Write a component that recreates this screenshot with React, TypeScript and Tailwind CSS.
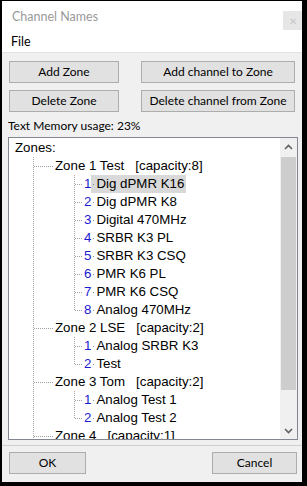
import React from "react";

type Row =
   | { kind: "root"; label: string }
   | { kind: "zone"; name: string; capacity: number }
   | { kind: "channel"; num: number; name: string; last: boolean; selected?: boolean };

const rows: Row[] = [
   { kind: "root", label: "Zones:" },
   { kind: "zone", name: "Zone 1 Test", capacity: 8 },
   { kind: "channel", num: 1, name: "Dig dPMR K16", last: false, selected: true },
   { kind: "channel", num: 2, name: "Dig dPMR K8", last: false },
   { kind: "channel", num: 3, name: "Digital 470MHz", last: false },
   { kind: "channel", num: 4, name: "SRBR K3 PL", last: false },
   { kind: "channel", num: 5, name: "SRBR K3 CSQ", last: false },
   { kind: "channel", num: 6, name: "PMR K6 PL", last: false },
   { kind: "channel", num: 7, name: "PMR K6 CSQ", last: false },
   { kind: "channel", num: 8, name: "Analog 470MHz", last: true },
   { kind: "zone", name: "Zone 2 LSE", capacity: 2 },
   { kind: "channel", num: 1, name: "Analog SRBR K3", last: false },
   { kind: "channel", num: 2, name: "Test", last: true },
   { kind: "zone", name: "Zone 3 Tom", capacity: 2 },
   { kind: "channel", num: 1, name: "Analog Test 1", last: false },
   { kind: "channel", num: 2, name: "Analog Test 2", last: true },
   { kind: "zone", name: "Zone 4", capacity: 1 },
];

const DOT = "#a0a0a0";

const WinButton: React.FC<{ label: string; className?: string }> = ({ label, className = "" }) => (
   <button className={`h-[22px] border border-[#adadad] bg-[#e1e1e1] text-[12px] text-black leading-none ${className}`}>{label}</button>
);

const TreeRow: React.FC<{ row: Row }> = ({ row }) => {
   if (row.kind === "root") {
      return <div className="h-[18px] flex items-center pl-[6px]">{row.label}</div>;
   }
   if (row.kind === "zone") {
      return (
         <div className="h-[18px] flex items-center">
            <svg width="46" height="18" className="shrink-0">
               <line x1="24.5" y1="0" x2="24.5" y2="18" stroke={DOT} strokeDasharray="1 1" />
               <line x1="25" y1="9.5" x2="44" y2="9.5" stroke={DOT} strokeDasharray="1 1" />
            </svg>
            <span className="whitespace-pre">
               {row.name}
               {"   "}[capacity:{row.capacity}]
            </span>
         </div>
      );
   }
   return (
      <div className="h-[18px] flex items-center">
         <svg width="75" height="18" className="shrink-0">
            <line x1="24.5" y1="0" x2="24.5" y2="18" stroke={DOT} strokeDasharray="1 1" />
            <line x1="65.5" y1="0" x2="65.5" y2={row.last ? 10 : 18} stroke={DOT} strokeDasharray="1 1" />
            <line x1="66" y1="9.5" x2="74" y2="9.5" stroke={DOT} strokeDasharray="1 1" />
         </svg>
         <span className="text-[#1a1ad0]">{row.num}</span>
         <span className={`h-[18px] flex items-center pr-[2px] ${row.selected ? "bg-[#d9d9d9]" : ""}`}>
            <span className="w-[1px] h-[1px] bg-[#909090] ml-[2px] mr-[2px]" />
            {row.name}
         </span>
      </div>
   );
};

const Chevron: React.FC<{ up?: boolean }> = ({ up }) => (
   <svg width="9" height="6" viewBox="0 0 9 6">
      <path d={up ? "M1 5 L4.5 1.5 L8 5" : "M1 1 L4.5 4.5 L8 1"} fill="none" stroke="#606060" strokeWidth="1.6" />
   </svg>
);

export default function App() {
   return (
      <div className="w-[307px] h-[486px] bg-black pl-[2px] pt-[1px] pr-[5px] pb-[4px]" style={{ fontFamily: "Lato, 'Liberation Sans', sans-serif" }}>
         <div className="h-full flex flex-col bg-[#f0f0f0]">
            {/* Title bar */}
            <div className="h-[32px] bg-white flex items-start justify-between shrink-0">
               <span className="pl-[10px] pt-[10px] text-[12.5px] text-[#9a9a9a] leading-none">Channel Names</span>
               <div className="mt-[10px] w-[19px] h-[19px] bg-[#e6e6e6] flex items-center justify-center text-[10px] text-[#c8c8c8] leading-none">✕</div>
            </div>
            {/* Menu */}
            <div className="h-[19px] bg-white flex items-center pl-[9px] text-[12.5px] text-black shrink-0">File</div>
            <div className="h-[1px] bg-[#e3e3e3] shrink-0" />

            {/* Body */}
            <div className="flex-1 flex flex-col px-[7px] pt-[8px]">
               <div className="flex flex-col gap-[7px]">
                  <div className="flex gap-[22px]">
                     <WinButton label="Add Zone" className="w-[110px]" />
                     <WinButton label="Add channel to Zone" className="w-[154px]" />
                  </div>
                  <div className="flex gap-[22px]">
                     <WinButton label="Delete Zone" className="w-[110px]" />
                     <WinButton label="Delete channel from Zone" className="w-[154px]" />
                  </div>
               </div>
               <div className="mt-[7px] h-[14px] flex items-center text-[12px] text-black -ml-[1px]">Text Memory usage: 23%</div>

               {/* Tree */}
               <div className="mt-[4px] -ml-[1px] w-[290px] h-[303px] border border-[#828790] bg-white flex overflow-hidden">
                  <div className="flex-1 overflow-hidden pt-[1px] text-[13.3px] text-black" style={{ fontFamily: "'Liberation Sans', Arial, sans-serif" }}>
                     {rows.map((r, i) => (
                        <TreeRow key={i} row={r} />
                     ))}
                  </div>
                  <div className="w-[17px] bg-[#f0f0f0] flex flex-col items-center shrink-0">
                     <div className="h-[17px] w-full flex items-center justify-center">
                        <Chevron up />
                     </div>
                     <div className="mt-[2px] w-[15px] h-[233px] bg-[#cdcdcd]" />
                     <div className="flex-1" />
                     <div className="h-[17px] w-full flex items-center justify-center">
                        <Chevron />
                     </div>
                  </div>
               </div>
            </div>

            <div className="h-[1px] bg-[#cfcfcf] mt-[4px] shrink-0" />
            <div className="flex justify-between pl-[7px] pr-[5px] pt-[6px] pb-[8px] shrink-0">
               <WinButton label="OK" className="w-[77px] h-[22px]" />
               <WinButton label="Cancel" className="w-[85px] h-[22px]" />
            </div>
         </div>
      </div>
   );
}
